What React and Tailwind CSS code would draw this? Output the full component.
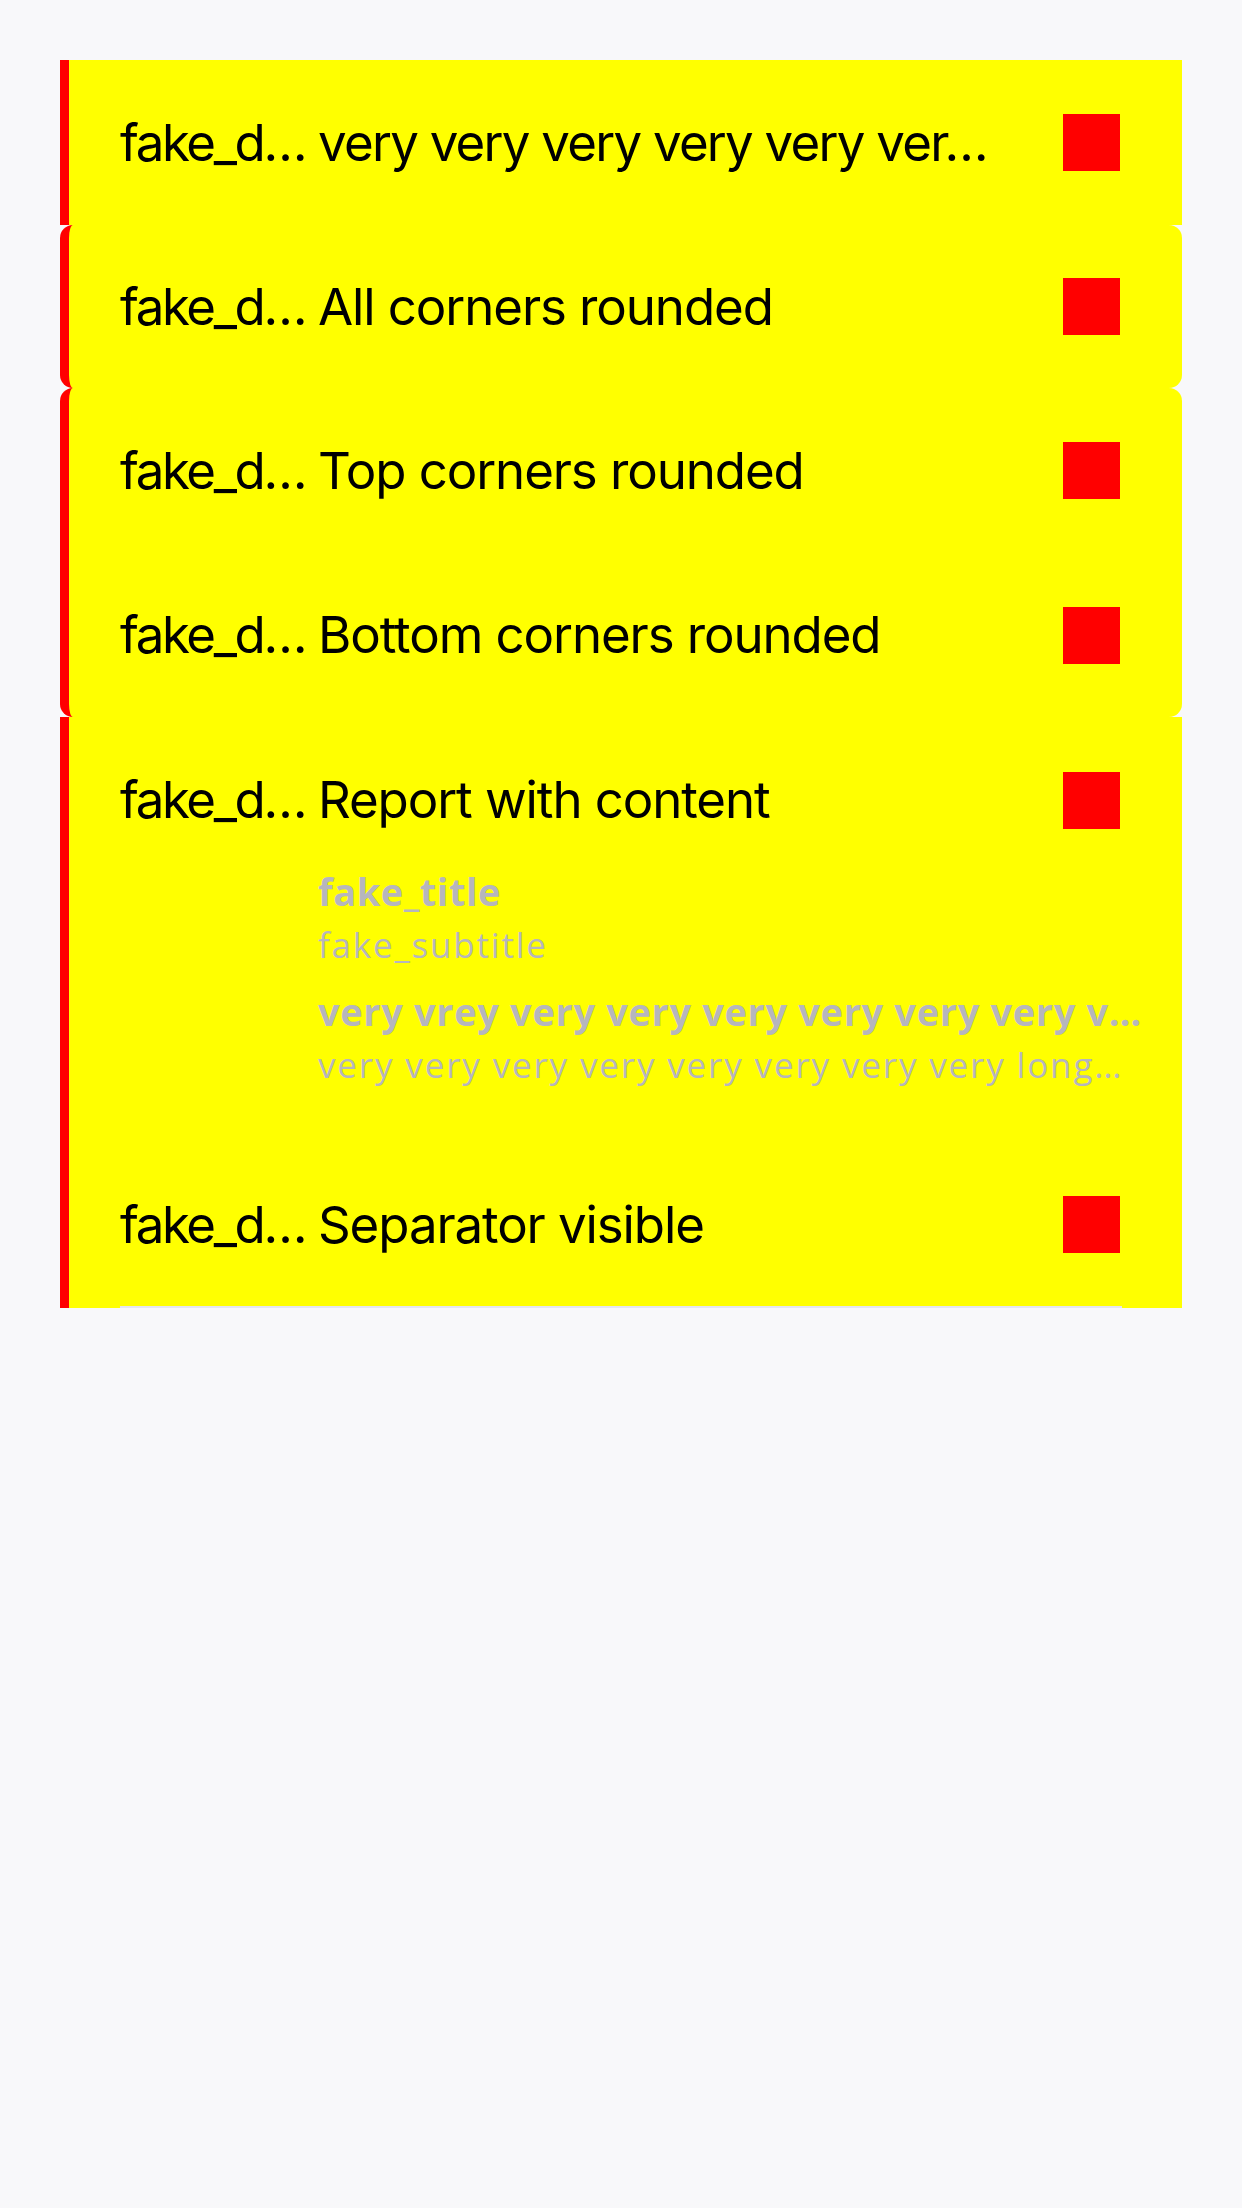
import React from "react";

const main = { fontFamily: "Inter, 'Liberation Sans', sans-serif" };
const gray = { fontFamily: "'Open Sans', Lato, sans-serif" };

function RowHead({ title, tight }) {
  return (
    <div className="flex items-center pl-[51px] w-full" style={main}>
      <div className="w-[198px] shrink-0 text-[51px] leading-[62px] tracking-[-2.4px] text-black whitespace-nowrap">
        fake_d…
      </div>
      <div
        className={
          tight
            ? "flex-1 min-w-0 text-[51px] leading-[62px] tracking-[-1.75px] text-black whitespace-nowrap overflow-hidden"
            : "flex-1 min-w-0 text-[51px] leading-[62px] tracking-[-1.1px] text-black whitespace-nowrap overflow-hidden"
        }
      >
        {title}
      </div>
      <div className="w-[57px] h-[57px] bg-[#ff0000] shrink-0 ml-[20px] mr-[62px]" />
    </div>
  );
}

export default function App() {
  return (
    <div className="min-h-[2208px] bg-[#f8f8fa] px-[60px] pt-[60px]">
      <div className="flex flex-col">
        <div className="h-[165px] bg-[#ffff00] border-l-[9px] border-[#ff0000] flex items-center">
          <RowHead title="very very very very very ver…" tight />
        </div>
        <div className="h-[163px] bg-[#ffff00] border-l-[9px] border-[#ff0000] rounded-[13px] flex items-center">
          <RowHead title="All corners rounded" />
        </div>
        <div className="h-[165px] bg-[#ffff00] border-l-[9px] border-[#ff0000] rounded-t-[13px] flex items-center">
          <RowHead title="Top corners rounded" />
        </div>
        <div className="h-[164px] bg-[#ffff00] border-l-[9px] border-[#ff0000] rounded-b-[13px] flex items-center">
          <RowHead title="Bottom corners rounded" />
        </div>
        <div className="bg-[#ffff00] border-l-[9px] border-[#ff0000] flex flex-col">
          <div className="h-[150px] pt-[16px] flex items-center">
            <RowHead title="Report with content" />
          </div>
          <div className="pl-[249px] pr-[20px] pb-[57px] flex flex-col text-[#b6b6bd]" style={gray}>
            <div className="text-[38px] leading-[48px] font-bold tracking-[0.5px] whitespace-nowrap">fake_title</div>
            <div className="mt-[8px] text-[35px] leading-[43px] tracking-[1.8px] whitespace-nowrap">fake_subtitle</div>
            <div className="mt-[21px] text-[38px] leading-[48px] font-bold tracking-[0.65px] whitespace-nowrap">
              very vrey very very very very very very v…
            </div>
            <div className="mt-[8px] text-[35px] leading-[43px] tracking-[1.85px] whitespace-nowrap">
              very very very very very very very very long…
            </div>
          </div>
        </div>
        <div className="bg-[#ffff00] border-l-[9px] border-[#ff0000] flex flex-col">
          <div className="h-[163px] flex items-center">
            <RowHead title="Separator visible" />
          </div>
          <div className="h-[2px] ml-[51px] mr-[60px] bg-[#e6e6ee]" />
        </div>
      </div>
    </div>
  );
}
